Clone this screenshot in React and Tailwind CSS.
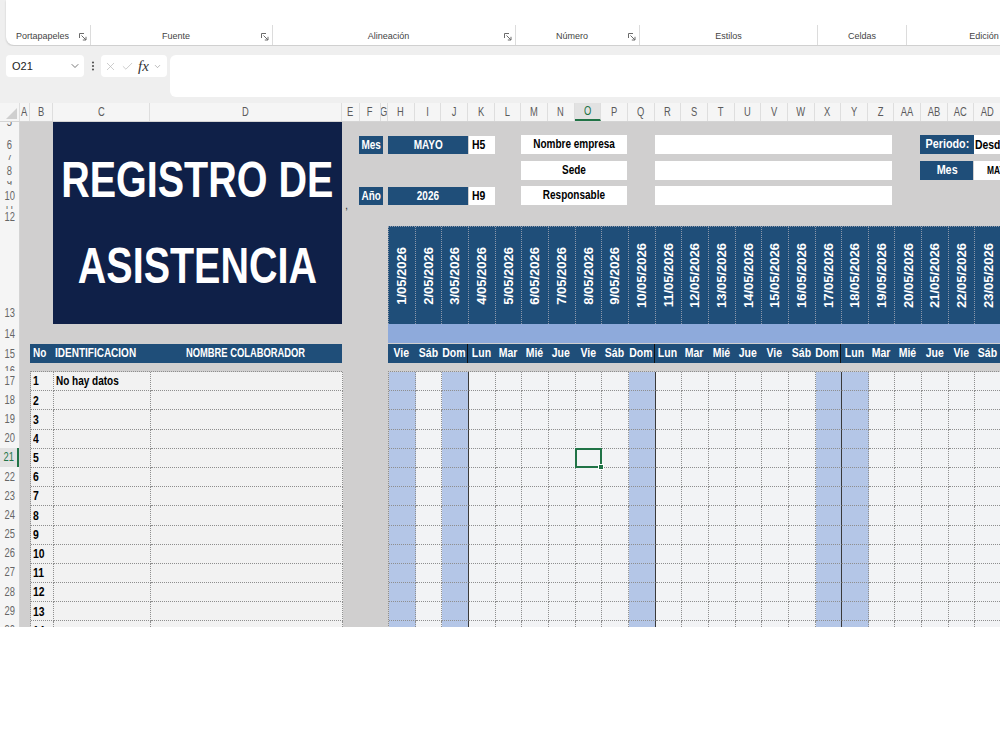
import React from "react";
import { ChevronDown, X, Check, EllipsisVertical } from "lucide-react";

const SANS = "font-['Liberation_Sans',Arial,sans-serif]";

const WEEK = ["Vie", "Sáb", "Dom", "Lun", "Mar", "Mié", "Jue"];
const FILLED = [0, 2, 9, 16, 17];
const SPLIT = [2, 9, 16];
const DAYS = Array.from({ length: 23 }, (_, i) => ({
  date: `${i + 1}/05/2026`,
  name: WEEK[i % 7],
  filled: FILLED.includes(i),
  split: SPLIT.includes(i),
}));

const LETTERS = [
  "H", "I", "J", "K", "L", "M", "N", "O", "P", "Q", "R", "S",
  "T", "U", "V", "W", "X", "Y", "Z", "AA", "AB", "AC", "AD",
];

const ROWS = [
  { n: 5, h: "h-[12px]", a: "items-start", pad: "-mt-[8px]" },
  { n: 6, h: "h-[21px]", a: "items-center", pad: "" },
  { n: 7, h: "h-[5px]", a: "items-center", pad: "" },
  { n: 8, h: "h-[21px]", a: "items-center", pad: "" },
  { n: 9, h: "h-[4px]", a: "items-center", pad: "" },
  { n: 10, h: "h-[21px]", a: "items-center", pad: "" },
  { n: 11, h: "h-[3px]", a: "items-center", pad: "" },
  { n: 12, h: "h-[16px]", a: "items-center", pad: "" },
  { n: 13, h: "h-[99px]", a: "items-end", pad: "pb-[3px]" },
  { n: 14, h: "h-[20px]", a: "items-center", pad: "" },
  { n: 15, h: "h-[19px]", a: "items-center", pad: "" },
  { n: 16, h: "h-[8px]", a: "items-start", pad: "" },
  ...Array.from({ length: 14 }, (_, i) => ({
    n: 17 + i,
    h: "h-[19.2px]",
    a: "items-center",
    pad: "",
  })),
];

const GROUPS = [
  { label: "Portapapeles", w: "w-[85px]", launcher: true },
  { label: "Fuente", w: "w-[182px]", launcher: true },
  { label: "Alineación", w: "w-[243px]", launcher: true },
  { label: "Número", w: "w-[124px]", launcher: true },
  { label: "Estilos", w: "w-[178px]", launcher: false },
  { label: "Celdas", w: "w-[89px]", launcher: false },
  { label: "Edición", w: "w-[154px]", launcher: false },
];

// condensed text: Liberation Sans squeezed horizontally
function Nar({ children, className = "" }) {
  return (
    <span className={`inline-block whitespace-nowrap scale-x-[0.8] ${className}`}>
      {children}
    </span>
  );
}

function Launcher() {
  return (
    <svg width="8" height="8" viewBox="0 0 8 8" className="shrink-0">
      <path d="M0.5 5V0.5H5" stroke="#6b6b6b" fill="none" strokeWidth="1" />
      <path d="M2.5 2.5L7 7M7 3.8V7H3.8" stroke="#6b6b6b" fill="none" strokeWidth="1" />
    </svg>
  );
}

function Ribbon() {
  return (
    <div className="h-[46px] bg-[#efefef] overflow-hidden">
      <div className="ml-[6px] w-[1100px] h-[45px] bg-white rounded-bl-[8px] shadow-[0_1px_2px_rgba(0,0,0,0.18)] flex items-end">
        {GROUPS.map((g, i) => (
          <div
            key={g.label}
            className={`${g.w} h-[20px] shrink-0 flex items-center border-r border-[#dcdcdc] ${
              i === 6 ? "border-r-0" : ""
            }`}
          >
            <span className={`flex-1 text-center text-[9px] text-[#444] mt-[4px] ${SANS}`}>
              {g.label}
            </span>
            {g.launcher && (
              <span className="mr-[3px] mt-[4px] flex">
                <Launcher />
              </span>
            )}
          </div>
        ))}
      </div>
    </div>
  );
}

function FormulaBar() {
  return (
    <div className="flex items-start bg-[#efefef] pt-[9px] pb-[6px]">
      <div className="ml-[6px] w-[78px] h-[22px] bg-white rounded-[4px] flex items-center justify-between pl-[6px] pr-[3px]">
        <span className={`text-[11px] text-[#222] ${SANS}`}>O21</span>
        <ChevronDown size={12} strokeWidth={1.6} color="#555" />
      </div>
      <div className="w-[17px] h-[22px] flex items-center justify-center">
        <EllipsisVertical size={12} strokeWidth={2.4} color="#555" />
      </div>
      <div className="w-[66px] h-[22px] bg-white rounded-[4px] flex items-center pl-[3px] gap-[4px]">
        <X size={13} strokeWidth={1.3} color="#b8b8b8" />
        <Check size={13} strokeWidth={1.3} color="#b8b8b8" />
        <span className="text-[15px] italic text-[#333] font-['Liberation_Serif',serif] leading-none">
          fx
        </span>
        <ChevronDown size={9} strokeWidth={1.5} color="#888" />
      </div>
      <div className="ml-[3px] flex-1 h-[42px] bg-white rounded-l-[6px]" />
    </div>
  );
}

function ColumnHeader() {
  const base =
    "shrink-0 h-full flex items-center justify-center border-r border-[#dedede] text-[12px] text-[#5b5b5b] overflow-hidden";
  const lab = "inline-block scale-x-[0.78]";
  return (
    <div className={`flex h-[19px] bg-[#f5f5f5] border-b border-[#d4d4d4] ${SANS}`}>
      <div className="w-[20px] shrink-0 h-full flex items-end justify-end pr-[2px] pb-[2px] border-r border-[#dedede]">
        <svg width="11" height="11" viewBox="0 0 11 11">
          <polygon points="11,0 11,11 0,11" fill="#cfcfcf" />
        </svg>
      </div>
      <div className={`${base} w-[10px]`}><span className={lab}>A</span></div>
      <div className={`${base} w-[23px]`}><span className={lab}>B</span></div>
      <div className={`${base} w-[97px]`}><span className={lab}>C</span></div>
      <div className={`${base} w-[192px]`}><span className={lab}>D</span></div>
      <div className={`${base} w-[18px]`}><span className={lab}>E</span></div>
      <div className={`${base} w-[21px]`}><span className={lab}>F</span></div>
      <div className={`${base} w-[7px]`}><span className={lab}>G</span></div>
      {LETTERS.map((l) =>
        l === "O" ? (
          <div
            key={l}
            className="shrink-0 h-full w-[26.667px] flex items-center justify-center border-r border-[#dedede] border-b-2 border-b-[#217346] bg-[#e2e2e2] text-[12px] text-[#217346]"
          >
            <span className={lab}>{l}</span>
          </div>
        ) : (
          <div key={l} className={`${base} w-[26.667px]`}>
            <span className={lab}>{l}</span>
          </div>
        )
      )}
    </div>
  );
}

function RowHeader() {
  return (
    <div className={`w-[20px] shrink-0 flex flex-col overflow-hidden bg-[#f5f5f5] border-r border-[#d4d4d4] ${SANS}`}>
      {ROWS.map((r) =>
        r.n === 21 ? (
          <div
            key={r.n}
            className={`${r.h} shrink-0 flex items-center justify-center overflow-hidden text-[12px] text-[#217346] bg-[#e2e2e2] border-r-2 border-[#217346]`}
          >
            <span className="inline-block scale-x-[0.78]">{r.n}</span>
          </div>
        ) : (
          <div
            key={r.n}
            className={`${r.h} shrink-0 flex ${r.a} justify-center overflow-hidden text-[12px] text-[#666]`}
          >
            <span className={`inline-block scale-x-[0.78] leading-[16px] ${r.pad}`}>{r.n}</span>
          </div>
        )
      )}
    </div>
  );
}

function InfoLabel({ children, className = "" }) {
  return (
    <div
      className={`bg-[#1f4e79] text-white font-bold flex items-center justify-center ${className}`}
    >
      <Nar>{children}</Nar>
    </div>
  );
}

function Sheet() {
  const dotted = "border-dotted border-[#8e8e8e]";
  return (
    <div className="flex-1 overflow-hidden bg-[#d0cfcf]">
      <div
        className={`grid w-max grid-cols-[10px_23px_97px_192px_18px_21px_7px_repeat(23,26.667px)_40px] grid-rows-[12px_21px_5px_21px_4px_21px_3px_16px_99px_20px_19px_8px_repeat(14,19.2px)] ${SANS}`}
      >
        {/* title block */}
        <div className="col-start-3 col-span-2 row-start-1 row-span-9 bg-[#0f2048] flex flex-col items-center justify-center text-white font-bold text-[50px] leading-[86px]">
          <span className="inline-block whitespace-nowrap scale-x-[0.79]">REGISTRO DE</span>
          <span className="inline-block whitespace-nowrap scale-x-[0.79]">ASISTENCIA</span>
        </div>

        {/* month / year selectors */}
        <div className="col-start-6 col-span-2 row-start-2 pt-[2px] pb-[1px] pr-[5px] -ml-[1px] flex">
          <InfoLabel className="flex-1 text-[12.5px]">Mes</InfoLabel>
        </div>
        <div className="col-start-8 col-span-3 row-start-2 pt-[2px] pb-[1px] flex">
          <InfoLabel className="flex-1 text-[12.5px]">MAYO</InfoLabel>
        </div>
        <div className="col-start-11 row-start-2 pt-[2px] pb-[1px] pl-[1px] flex">
          <div className="flex-1 bg-white flex items-center pl-[3px] font-bold text-[13px] text-black">
            <Nar className="origin-left">H5</Nar>
          </div>
        </div>
        <div className="col-start-6 col-span-2 row-start-6 pt-[2px] pb-[1px] pr-[5px] -ml-[1px] flex">
          <InfoLabel className="flex-1 text-[12.5px]">Año</InfoLabel>
        </div>
        <div className="col-start-8 col-span-3 row-start-6 pt-[2px] pb-[1px] flex">
          <InfoLabel className="flex-1 text-[12.5px]">2026</InfoLabel>
        </div>
        <div className="col-start-11 row-start-6 pt-[2px] pb-[1px] pl-[1px] flex">
          <div className="flex-1 bg-white flex items-center pl-[3px] font-bold text-[13px] text-black">
            <Nar className="origin-left">H9</Nar>
          </div>
        </div>
        <div className="col-start-5 row-start-6 row-span-2 flex items-end pl-[3px] text-[11px] leading-[8px] text-[#333]">
          ,
        </div>

        {/* company data */}
        <div className="col-start-13 col-span-4 row-start-2 pt-[1px] pb-[1px] pr-[1px] flex">
          <div className="flex-1 bg-white flex items-center justify-center font-bold text-[12.5px] text-black">
            <Nar>Nombre empresa</Nar>
          </div>
        </div>
        <div className="col-start-13 col-span-4 row-start-4 pt-[1px] pb-[1px] pr-[1px] flex">
          <div className="flex-1 bg-white flex items-center justify-center font-bold text-[12.5px] text-black">
            <Nar>Sede</Nar>
          </div>
        </div>
        <div className="col-start-13 col-span-4 row-start-6 pt-[1px] pb-[1px] pr-[1px] flex">
          <div className="flex-1 bg-white flex items-center justify-center font-bold text-[12.5px] text-black">
            <Nar>Responsable</Nar>
          </div>
        </div>
        <div className="col-start-18 col-span-9 row-start-2 pt-[1px] pb-[1px] pr-[2px] flex">
          <div className="flex-1 bg-white" />
        </div>
        <div className="col-start-18 col-span-9 row-start-4 pt-[1px] pb-[1px] pr-[2px] flex">
          <div className="flex-1 bg-white" />
        </div>
        <div className="col-start-18 col-span-9 row-start-6 pt-[1px] pb-[1px] pr-[2px] flex">
          <div className="flex-1 bg-white" />
        </div>

        {/* period */}
        <div className="col-start-28 col-span-2 row-start-2 pt-[1px] pb-[1px] -ml-[1px] pr-[1px] flex">
          <InfoLabel className="flex-1 text-[13.5px]">Periodo:</InfoLabel>
        </div>
        <div className="col-start-30 col-span-2 row-start-2 pt-[1px] pb-[1px] flex">
          <div className="flex-1 bg-white flex items-center pl-[1px] font-bold text-[13px] text-black">
            <Nar className="origin-left">Desde: 01/05/2026</Nar>
          </div>
        </div>
        <div className="col-start-28 col-span-2 row-start-4 pt-[1px] pb-[1px] -ml-[1px] pr-[1px] flex">
          <InfoLabel className="flex-1 text-[13.5px]">Mes</InfoLabel>
        </div>
        <div className="col-start-30 col-span-2 row-start-4 pt-[1px] pb-[1px] flex">
          <div className="flex-1 bg-white flex items-center pl-[13px] font-bold text-[10.5px] text-black">
            <Nar className="origin-left">MAYO</Nar>
          </div>
        </div>

        {/* date header */}
        <div className="col-start-8 col-span-24 row-start-9 mt-[1px] flex bg-[#1f4e79] border-t border-l border-dotted border-[#8d98aa]">
          {DAYS.map((d) => (
            <div
              key={d.date}
              className="w-[26.667px] h-full shrink-0 flex items-center justify-center border-r border-dotted border-[#8d98aa]"
            >
              <span className="[writing-mode:vertical-rl] rotate-180 whitespace-nowrap text-white font-bold text-[13px]">
                {d.date}
              </span>
            </div>
          ))}
        </div>
        <div className="col-start-8 col-span-24 row-start-10 mb-[1px] bg-[#8eaadb]" />
        <div className="col-start-8 col-span-24 row-start-11 flex bg-[#1f4e79]">
          {DAYS.map((d) => (
            <div
              key={d.date}
              className={`w-[26.667px] h-full shrink-0 flex items-center justify-center text-white font-bold text-[12.5px] ${
                d.split ? "border-r border-[#111]" : ""
              }`}
            >
              <span className="inline-block whitespace-nowrap scale-x-[0.84]">{d.name}</span>
            </div>
          ))}
        </div>

        {/* staff table */}
        <div className="col-start-2 col-span-3 row-start-11 bg-[#1f4e79] flex items-center text-white font-bold text-[12.5px]">
          <span className="w-[23px] pl-[3px] shrink-0">
            <Nar className="origin-left">No</Nar>
          </span>
          <span className="w-[97px] pl-[2px] shrink-0">
            <Nar className="origin-left">IDENTIFICACION</Nar>
          </span>
          <span className="flex-1 flex justify-center">
            <span className="inline-block whitespace-nowrap scale-x-[0.75]">NOMBRE COLABORADOR</span>
          </span>
        </div>
        <div
          className={`col-start-2 col-span-3 row-start-13 row-span-14 grid grid-cols-[23px_97px_192px] auto-rows-[19.2px] border-t border-l ${dotted}`}
        >
          {Array.from({ length: 14 }, (_, i) => (
            <React.Fragment key={i}>
              <div
                className={`bg-[#f2f2f2] border-r border-b ${dotted} flex items-center pl-[2px] font-bold text-[13px] text-black`}
              >
                <Nar className="origin-left">{i + 1}</Nar>
              </div>
              <div
                className={`bg-[#f2f2f2] border-r border-b ${dotted} flex items-center pl-[2px] font-bold text-[12.5px] text-black`}
              >
                {i === 0 ? <Nar className="origin-left">No hay datos</Nar> : null}
              </div>
              <div className={`bg-[#f2f2f2] border-r border-b ${dotted}`} />
            </React.Fragment>
          ))}
        </div>

        {/* attendance grid */}
        <div
          className={`col-start-8 col-span-24 row-start-13 row-span-14 grid grid-cols-[repeat(23,26.667px)] auto-rows-[19.2px] border-t border-l ${dotted}`}
        >
          {Array.from({ length: 14 }, (_, r) =>
            DAYS.map((d, c) => {
              const fill = d.filled ? "bg-[#b4c6e7]" : "bg-[#f2f3f5]";
              const selected = r === 4 && c === 7;
              return (
                <div
                  key={`${r}-${c}`}
                  className={`${fill} ${dotted} border-b ${
                    d.split
                      ? "border-r border-solid border-r-[#3a3a3a] [border-bottom-style:dotted]"
                      : "border-r"
                  } ${selected ? "relative" : ""}`}
                >
                  {selected && (
                    <div className="absolute -inset-px border-2 border-[#217346]">
                      <div className="absolute -right-[4px] -bottom-[4px] w-[6px] h-[6px] bg-[#217346] border border-white" />
                    </div>
                  )}
                </div>
              );
            })
          )}
        </div>
      </div>
    </div>
  );
}

export default function App() {
  return (
    <div className="w-[1000px] h-[750px] overflow-hidden bg-white">
      <Ribbon />
      <FormulaBar />
      <ColumnHeader />
      <div className="flex h-[505px]">
        <RowHeader />
        <Sheet />
      </div>
      <div className="h-[123px] bg-white" />
    </div>
  );
}
